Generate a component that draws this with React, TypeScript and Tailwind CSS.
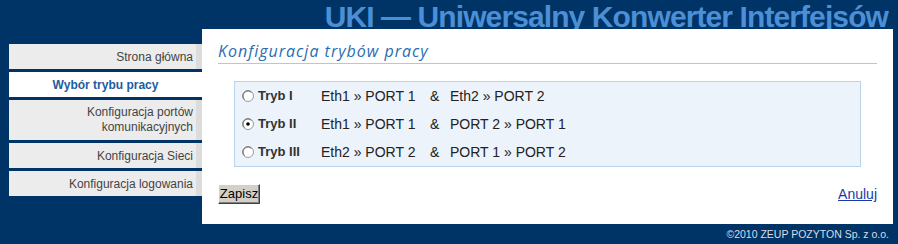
const menu = [
  { label: ["Strona główna"], active: false },
  { label: ["Wybór trybu pracy"], active: true },
  { label: ["Konfiguracja portów", "komunikacyjnych"], active: false },
  { label: ["Konfiguracja Sieci"], active: false },
  { label: ["Konfiguracja logowania"], active: false },
];

const modes = [
  { name: "Tryb I", a: "Eth1 » PORT 1", b: "Eth2 » PORT 2", checked: false },
  { name: "Tryb II", a: "Eth1 » PORT 1", b: "PORT 2 » PORT 1", checked: true },
  { name: "Tryb III", a: "Eth2 » PORT 2", b: "PORT 1 » PORT 2", checked: false },
];

function Radio({ checked }: { checked: boolean }) {
  return (
    <svg width="12" height="12" viewBox="0 0 12 12" className="shrink-0">
      <circle cx="6" cy="6" r="5.5" fill="#fff" stroke="#9a9a9a" />
      <path d="M2.5 9.5 A4.6 4.6 0 0 1 9.5 2.5" fill="none" stroke="#555" strokeWidth="0.8" />
      {checked && <circle cx="6" cy="6" r="1.8" fill="#000" />}
    </svg>
  );
}

export default function App() {
  return (
    <div
      className="w-[898px] h-[244px] bg-[#003366] overflow-hidden"
      style={{ fontFamily: '"Liberation Sans", Arial, sans-serif' }}
    >
      <div className="h-[29px] overflow-hidden flex justify-end pr-[10px] pt-[2px]">
        <div className="text-[30px] leading-[30px] font-bold tracking-[-0.9px] text-[#4b8fd6] whitespace-nowrap">
          UKI — Uniwersalny Konwerter Interfejsów
        </div>
      </div>

      <div className="flex">
        <div className="w-[202px] pl-[9px] pt-[15px] flex flex-col gap-[3px]">
          {menu.map((m, i) =>
            m.active ? (
              <div
                key={i}
                className="h-[25px] bg-white flex items-center justify-center text-[12px] font-bold text-[#1f5c9e]"
              >
                {m.label[0]}
              </div>
            ) : (
              <div key={i} className="flex bg-[#ececec]">
                <div
                  className={`flex-1 flex flex-col justify-center items-end pr-[3px] text-[12px] text-[#444] ${
                    m.label.length > 1 ? "h-[40px] leading-[15px]" : "h-[25px]"
                  }`}
                >
                  {m.label.map((l) => (
                    <div key={l}>{l}</div>
                  ))}
                </div>
                <div className="w-[6px] bg-[#dcdcdc]" />
              </div>
            )
          )}
        </div>

        <div className="w-[691px] h-[195px] bg-white px-4 pt-[12px]">
          <div
            className="text-[16px] leading-[20px] italic tracking-[1px] text-[#2b6cb0] pb-[2px] border-b border-[#c4c4c4]"
            style={{ fontFamily: '"Open Sans", "DejaVu Sans", sans-serif' }}
          >
            Konfiguracja trybów pracy
          </div>

          <div className="mx-4 mt-[17px] border border-[#b8d4ee] bg-[#ecf3fb]">
            {modes.map((r) => (
              <div key={r.name} className="h-[28px] flex items-center pl-[7px] text-[14px] text-[#222]">
                <Radio checked={r.checked} />
                <span className="w-[67px] pl-[4px] text-[13px] font-bold text-[#333]">{r.name}</span>
                <span className="w-[109px]">{r.a}</span>
                <span className="w-[20px]">&amp;</span>
                <span>{r.b}</span>
              </div>
            ))}
          </div>

          <div className="flex items-start justify-between mt-[17px]">
            <button
              className="h-[20px] w-[42px] bg-[#d4d0c8] text-[13px] leading-[16px] text-black border border-t-white border-l-white border-b-[#404040] border-r-[#404040] shadow-[inset_-1px_-1px_#808080]"
            >
              Zapisz
            </button>
            <a href="#" className="text-[14px] leading-[16px] text-[#1a3aa8] underline mt-[2px]">
              Anuluj
            </a>
          </div>
        </div>
      </div>

      <div className="flex justify-end pr-[9px] pt-[3px] text-[10.5px] leading-[14px] text-[#d6dde6]">
        ©2010 ZEUP POZYTON Sp. z o.o.
      </div>
    </div>
  );
}
